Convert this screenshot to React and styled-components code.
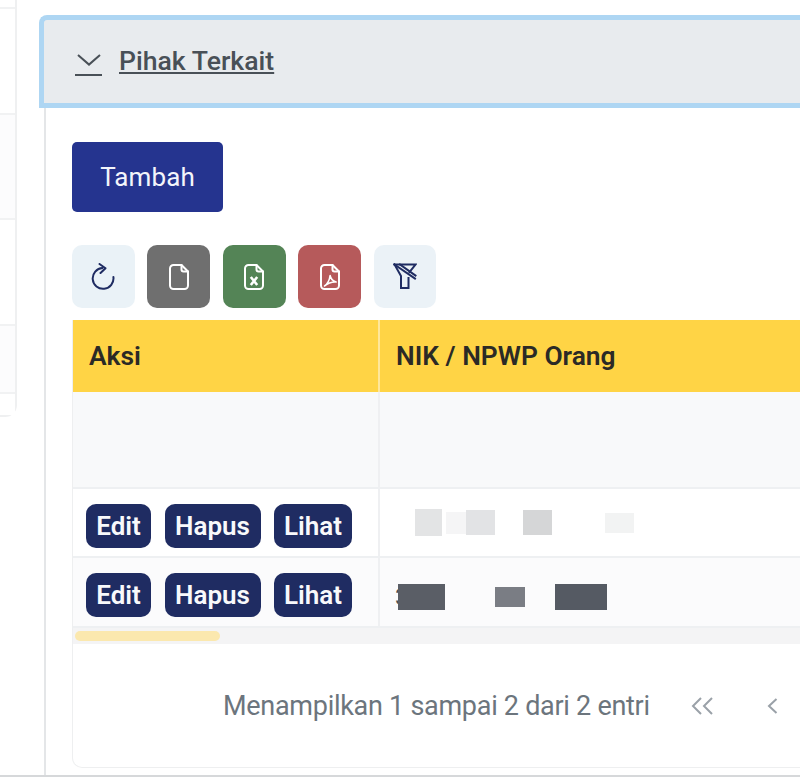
import React from "react";
import styled, { createGlobalStyle } from "styled-components";

const Global = createGlobalStyle`
  html, body { margin: 0; padding: 0; background: #fff; }
  body { width: 800px; height: 777px; overflow: hidden; font-family: Roboto, "Liberation Sans", sans-serif; }
  * { box-sizing: border-box; }
`;
const Page = styled.div`
  width: 800px; height: 777px; display: flex; align-items: flex-start; overflow: hidden;
  border-bottom: 2px solid #d6d8da; background: #fff;
`;
const Sidebar = styled.aside`
  flex: 0 0 17px; height: 417px; padding-top: 7px; display: flex; flex-direction: column;
  border-right: 2px solid #eff0f1; border-bottom: 2px solid #eff0f1; border-bottom-right-radius: 12px;
`;
const SideRow = styled.div`
  height: ${p => p.$h}px; border-top: 2px solid #f1f2f3; background: ${p => p.$alt ? "#fcfcfd" : "#fff"};
`;
const Main = styled.main`
  flex: 0 0 783px; padding: 15px 0 0 22px; height: 775px; display: flex; flex-direction: column;
`;
const AccordionHeader = styled.div`
  width: 770px; height: 93px; flex: none; display: flex; align-items: center; gap: 17px; padding: 0 0 0 31px;
  background: #e8ebee; border: 5px solid #aed6f3; border-right: 0; border-top-left-radius: 8px;
  color: #495057;
`;
const Chevron = styled.span`
  display: flex; flex-direction: column; align-items: center; width: 27px; gap: 8px; margin-top: 6px;
`;
const Title = styled.span`
  font-size: 26.6px; font-weight: 500; line-height: 30px; text-decoration: underline; text-underline-offset: 2px;
  text-decoration-thickness: 2px; margin-top: -1px;
`;
const AccordionBody = styled.div`
  margin-left: 5px; width: 760px; flex: 1; border-left: 2px solid #e4e6e8; padding: 34px 0 7px 26px;
  display: flex; flex-direction: column; align-items: flex-start;
`;
const AddButton = styled.button`
  width: 151px; height: 70px; border: 0; border-radius: 5px; background: #25348f; color: #f3f5fb;
  font: 400 26px Roboto, sans-serif; letter-spacing: .1px; padding: 0;
`;
const Toolbar = styled.div`
  display: flex; gap: 12.6px; margin-top: 33px; height: 63px;
`;
const ToolButton = styled.button`
  width: 62.8px; height: 63px; border: 0; border-radius: 10px; padding: 0;
  display: flex; align-items: center; justify-content: center;
  background: ${p => p.$bg}; color: ${p => p.$fg};
`;
const Card = styled.section`
  margin-top: 12px; width: 733px; flex: 1; border: 1px solid #eeeff0; border-top: 0; border-right: 0;
  border-bottom-left-radius: 10px; display: flex; flex-direction: column; overflow: hidden;
`;
const Row = styled.div`
  display: grid; grid-template-columns: 305px 1fr; height: ${p => p.$h}px; flex: none;
  background: ${p => p.$bg}; border-bottom: ${p => p.$line ? "2px solid #eef0f2" : "0"};
`;
const HeadCell = styled.div`
  display: flex; align-items: center; padding-left: 16px; font-size: 26.4px; font-weight: 600; color: #2b2a26;
  & + & { border-left: 2px solid #ffe79a; }
`;
const ActionCell = styled.div`
  display: flex; align-items: center; gap: 13.5px; padding: ${p => p.$top}px 0 0 13px;
`;
const DataCell = styled.div`
  display: flex; align-items: center; padding: ${p => p.$top || 0}px 0 0 ${p => p.$pad || 0}px; border-left: 2px solid #eff0f2;
`;
const Action = styled.button`
  height: 43.5px; width: ${p => p.$w}px; flex: none; border: 0; border-radius: 10px; background: #1f2c62;
  color: #f8f9fb; font: 600 26px Roboto, sans-serif; padding: 0;
`;
const Smudge = styled.span`
  display: block; flex: none; width: ${p => p.$w}px; height: ${p => p.$h}px; background: ${p => p.$c};
  margin-left: ${p => p.$gap}px; filter: blur(.6px);
`;
const Digit = styled.span`
  flex: none; width: 0; font-size: 24px; color: #495057; line-height: 1;
`;
const Track = styled.div`
  height: 16px; flex: none; background: #f4f4f5; padding: 3px 0 0 2px;
`;
const Thumb = styled.div`
  width: 145px; height: 10px; border-radius: 5px; background: #fbe8ae;
`;
const Footer = styled.div`
  flex: 1; display: flex; align-items: center; padding: 0 0 0 150px; color: #6c757d; font-size: 27px;
  letter-spacing: -.28px;
`;
const Pager = styled.span`
  display: flex; align-items: center; color: #9aa1a8; margin-left: ${p => p.$gap}px;
`;

const FileIcon = ({ children }) => (
  <svg width="24" height="30" viewBox="0 0 24 30" fill="none" stroke="currentColor" strokeWidth="2" strokeLinecap="round" strokeLinejoin="round">
    <path d="M14.5 3H6.5A3.5 3.5 0 0 0 3 6.5v17A3.5 3.5 0 0 0 6.5 27h11a3.5 3.5 0 0 0 3.5-3.5V9.5L14.5 3Z" />
    <path d="M14.5 3v4.5a2 2 0 0 0 2 2H21" />
    {children}
  </svg>
);

const Actions = ({ top }) => (
  <ActionCell $top={top}>
    <Action $w={65}>Edit</Action>
    <Action $w={96}>Hapus</Action>
    <Action $w={78}>Lihat</Action>
  </ActionCell>
);

export default function App() {
  return (
    <Page>
      <Global />
      <Sidebar>
        <SideRow $h={106} />
        <SideRow $h={105} $alt />
        <SideRow $h={106} />
        <SideRow $h={68} $alt />
        <SideRow $h={23} />
      </Sidebar>
      <Main>
        <AccordionHeader>
          <Chevron>
            <svg width="24" height="12" viewBox="0 0 24 12" fill="none" stroke="#495057" strokeWidth="2"><path d="M1 1 12 10.6 23 1" /></svg>
            <svg width="27" height="2" viewBox="0 0 27 2"><rect width="27" height="2" fill="#495057" /></svg>
          </Chevron>
          <Title>Pihak Terkait</Title>
        </AccordionHeader>
        <AccordionBody>
          <AddButton>Tambah</AddButton>
          <Toolbar>
            <ToolButton $bg="#eaf2f7" $fg="#1f2c62">
              <svg width="24" height="27" viewBox="0 0 24 27" fill="none" stroke="currentColor" strokeWidth="2" strokeLinecap="round" strokeLinejoin="round">
                <path d="M11.5 5A10.4 10.4 0 1 0 22.4 14" />
                <path d="M8.5 1 14.5 5.2 9.5 10" />
              </svg>
            </ToolButton>
            <ToolButton $bg="#6f6f6f" $fg="#fff"><FileIcon /></ToolButton>
            <ToolButton $bg="#548456" $fg="#fff">
              <FileIcon><path d="m8.8 15 6.4 8M15.2 15l-6.4 8" strokeWidth="2.6" strokeLinecap="butt" /></FileIcon>
            </ToolButton>
            <ToolButton $bg="#b65a5b" $fg="#fff">
              <FileIcon>
                <path d="M6.5 24c2.5-1.8 5-5.5 5.6-10.5.6 3.5 2.6 5.5 6 6.5-4-.3-8 1-11.6 4Z" strokeWidth="1.6" />
              </FileIcon>
            </ToolButton>
            <ToolButton $bg="#ebf2f7" $fg="#1f2c62">
              <svg width="24" height="27" viewBox="0 0 24 27" fill="none" stroke="currentColor" strokeWidth="2" strokeLinejoin="miter" strokeLinecap="square">
                <path d="M1.5 1.5h21l-6 7.5" />
                <path d="M1.5 1.5l6.5 11.5v12h7.5V15" />
                <path d="M1.5 1.5 22 15.5" />
                <path d="M7 1.5 22.5 12.5" />
              </svg>
            </ToolButton>
          </Toolbar>
          <Card>
            <Row $h={72} $bg="#ffd445">
              <HeadCell>Aksi</HeadCell>
              <HeadCell>NIK / NPWP Orang</HeadCell>
            </Row>
            <Row $h={97} $bg="#f8f9fa" $line>
              <div />
              <DataCell />
            </Row>
            <Row $h={69} $bg="#fff" $line>
              <Actions top={7} />
              <DataCell $pad={21}>
                <Smudge $w={27} $h={27} $c="#e3e4e5" $gap={14} />
                <Smudge $w={20} $h={22} $c="#f5f5f6" $gap={4} />
                <Smudge $w={29} $h={25} $c="#e2e3e5" $gap={0} />
                <Smudge $w={29} $h={25} $c="#d5d6d7" $gap={28} />
                <Smudge $w={29} $h={20} $c="#f2f3f3" $gap={53} />
              </DataCell>
            </Row>
            <Row $h={70} $bg="#fbfbfc" $line>
              <Actions top={6} />
              <DataCell $pad={15} $top={9}>
                <Digit>3</Digit>
                <Smudge $w={47} $h={26} $c="#5a5e66" $gap={3} />
                <Smudge $w={30} $h={20} $c="#7a7d84" $gap={50} />
                <Smudge $w={52} $h={26} $c="#555a63" $gap={30} />
              </DataCell>
            </Row>
            <Track><Thumb /></Track>
            <Footer>
              Menampilkan 1 sampai 2 dari 2 entri
              <Pager $gap={41}>
                <svg width="23" height="20" viewBox="0 0 23 20" fill="none" stroke="currentColor" strokeWidth="2"><path d="M10 2 2 10l8 8M21 2l-8 8 8 8" /></svg>
              </Pager>
              <Pager $gap={53}>
                <svg width="11" height="18" viewBox="0 0 11 18" fill="none" stroke="currentColor" strokeWidth="2"><path d="M9.5 2 2 9l7.5 7" /></svg>
              </Pager>
            </Footer>
          </Card>
        </AccordionBody>
      </Main>
    </Page>
  );
}
